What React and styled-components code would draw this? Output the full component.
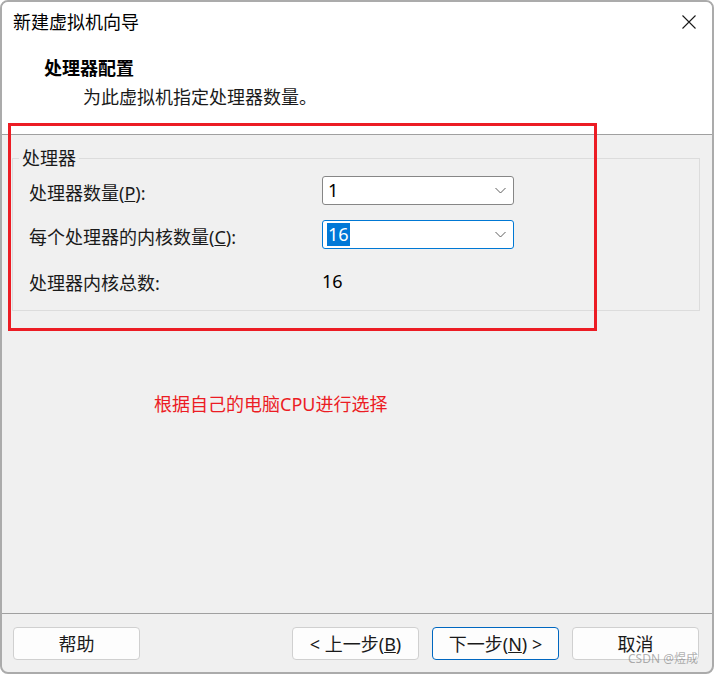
import React from 'react'
import styled, { createGlobalStyle } from 'styled-components'

const uiFont = `"Noto Sans", "Noto Sans CJK SC", sans-serif`
const lineColor = '#a0a0a0'

const GlobalStyle = createGlobalStyle`
  html, body {
    margin: 0;
    padding: 0;
    background: #ffffff;
  }
  body {
    font-family: ${uiFont};
    color: #1a1a1a;
  }
`

const Window = styled.div`
  position: relative;
  width: 714px;
  height: 674px;
  box-sizing: border-box;
  border: 2px solid #ababab;
  border-radius: 8px;
  overflow: hidden;
  display: flex;
  flex-direction: column;
  background: #f0f0f0;
`

const TitleBar = styled.div`
  height: 40px;
  flex-shrink: 0;
  background: #ffffff;
  display: flex;
  align-items: center;
  justify-content: space-between;
  padding-left: 11px;
`

const Title = styled.span`
  font-size: 18px;
  line-height: 24px;
  color: #000;
`

const CloseButton = styled.div`
  width: 46px;
  height: 40px;
  display: flex;
  align-items: center;
  justify-content: center;
`

const Header = styled.div`
  height: 93px;
  flex-shrink: 0;
  box-sizing: border-box;
  background: #ffffff;
  border-bottom: 1px solid ${lineColor};
  padding: 14px 0 0 42px;
`

const Heading = styled.div`
  font-size: 18px;
  line-height: 24px;
  font-weight: bold;
  color: #000;
`

const Subtitle = styled.div`
  margin: 5px 0 0 39px;
  font-size: 18px;
  line-height: 24px;
  color: #1a1a1a;
`

const Body = styled.div`
  flex: 1;
  padding: 11px 12px 0 10px;
`

const Group = styled.fieldset`
  margin: 0;
  min-width: 0;
  border: 1px solid #dcdcdc;
  padding: 5px 16px 15px 16px;
  display: flex;
  flex-direction: column;
  gap: 14px;
`

const Legend = styled.legend`
  padding: 0 3px;
  margin-left: -10px;
  font-size: 18px;
  line-height: 24px;
  color: #1a1a1a;
`

const Row = styled.div`
  display: flex;
  align-items: center;
  height: 30px;
  margin-top: ${p => p.$shift || 0}px;
`

const Label = styled.div`
  width: 293px;
  padding-top: 5px;
  font-size: 18px;
  line-height: 24px;
  color: #1a1a1a;
`

const Combo = styled.div`
  width: 192px;
  height: 29px;
  box-sizing: border-box;
  border: 1px solid ${p => (p.$focused ? '#0078d4' : '#868686')};
  border-radius: 3px;
  background: #ffffff;
  display: flex;
  align-items: center;
  justify-content: space-between;
  padding: 0 7px 0 4px;
`

const ComboText = styled.span`
  font-size: 18px;
  line-height: 23px;
  padding: 0 1px;
  color: ${p => (p.$selected ? '#ffffff' : '#000')};
  background: ${p => (p.$selected ? '#0078d7' : 'transparent')};
`

const Value = styled.span`
  font-size: 18px;
  line-height: 24px;
  color: #000;
  padding-top: 2px;
`

const Note = styled.div`
  margin: 81px 0 0 142px;
  font-size: 18px;
  line-height: 24px;
  color: #ec1c24;
`

const Footer = styled.div`
  height: 59px;
  flex-shrink: 0;
  box-sizing: border-box;
  border-top: 1px solid ${lineColor};
  padding: 13px 13px 0 11px;
  display: flex;
  align-items: flex-start;
`

const NavGroup = styled.div`
  margin-left: auto;
  display: flex;
  gap: 13px;
`

const Button = styled.div`
  width: 127px;
  height: 33px;
  box-sizing: border-box;
  border: 1px solid ${p => (p.$primary ? '#0067c0' : '#d0d0d0')};
  border-radius: 4px;
  background: #fdfdfd;
  display: flex;
  align-items: center;
  justify-content: center;
  font-size: 18px;
  line-height: 24px;
  color: #1a1a1a;
`

const Frame = styled.div`
  position: absolute;
  left: 6px;
  top: 121px;
  width: 589px;
  height: 208px;
  box-sizing: border-box;
  border: 3px solid #ec1c24;
  pointer-events: none;
`

const Watermark = styled.div`
  position: absolute;
  right: 14px;
  bottom: 5px;
  font-size: 12px;
  line-height: 16px;
  color: rgba(110, 110, 110, 0.55);
  pointer-events: none;
`

const CloseIcon = () => (
  <svg width="14" height="14" viewBox="0 0 14 14">
    <path d="M0.5 0.5 L13.5 13.5 M13.5 0.5 L0.5 13.5" stroke="#1a1a1a" strokeWidth="1.1" fill="none" />
  </svg>
)

const Chevron = () => (
  <svg width="11" height="7" viewBox="0 0 11 7">
    <polyline points="0.5,1 5.5,6 10.5,1" stroke="#5f5f5f" strokeWidth="1" fill="none" />
  </svg>
)

export default function App() {
  return (
    <>
      <GlobalStyle />
      <Window>
        <TitleBar>
          <Title>新建虚拟机向导</Title>
          <CloseButton><CloseIcon /></CloseButton>
        </TitleBar>

        <Header>
          <Heading>处理器配置</Heading>
          <Subtitle>为此虚拟机指定处理器数量。</Subtitle>
        </Header>

        <Body>
          <Group>
            <Legend>处理器</Legend>
            <Row>
              <Label>处理器数量(<u>P</u>):</Label>
              <Combo>
                <ComboText>1</ComboText>
                <Chevron />
              </Combo>
            </Row>
            <Row>
              <Label>每个处理器的内核数量(<u>C</u>):</Label>
              <Combo $focused>
                <ComboText $selected>16</ComboText>
                <Chevron />
              </Combo>
            </Row>
            <Row $shift={2}>
              <Label>处理器内核总数:</Label>
              <Value>16</Value>
            </Row>
          </Group>
          <Note>根据自己的电脑CPU进行选择</Note>
        </Body>

        <Footer>
          <Button>帮助</Button>
          <NavGroup>
            <Button>&lt; 上一步(<u>B</u>)</Button>
            <Button $primary>下一步(<u>N</u>) &gt;</Button>
            <Button>取消</Button>
          </NavGroup>
        </Footer>

        <Frame />
        <Watermark>CSDN @煜成</Watermark>
      </Window>
    </>
  )
}
